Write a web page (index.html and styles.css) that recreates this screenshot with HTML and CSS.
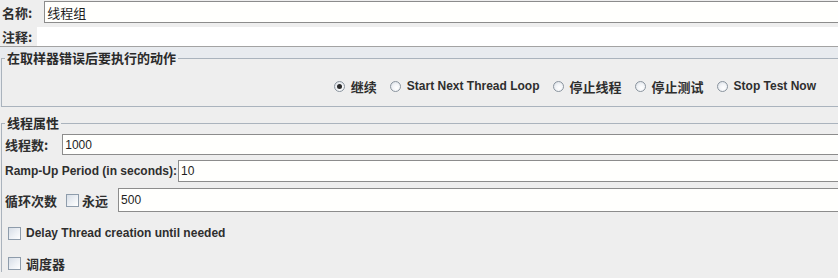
FILE: index.html
```html
<!DOCTYPE html>
<html lang="zh-CN">
<head>
    <meta charset="UTF-8">
    <meta name="viewport" content="width=device-width, initial-scale=1.0">
    <title>线程组</title>
    <link rel="stylesheet" href="styles.css">
</head>
<body>
    <div class="name-row">
        <span class="zh">名称:</span>
        <div class="field name-field"><span class="zh-value">线程组</span></div>
    </div>
    <div class="comment-row">
        <span class="zh">注释:</span>
        <div class="comment-field"></div>
    </div>

    <div class="actions-wrap">
        <fieldset class="group actions">
            <legend class="zh">在取样器错误后要执行的动作</legend>
            <div class="radio-row">
                <label class="radio-item"><span class="radio checked"></span><span class="zh">继续</span></label>
                <label class="radio-item"><span class="radio"></span>Start Next Thread Loop</label>
                <label class="radio-item"><span class="radio"></span><span class="zh">停止线程</span></label>
                <label class="radio-item"><span class="radio"></span><span class="zh">停止测试</span></label>
                <label class="radio-item"><span class="radio"></span>Stop Test Now</label>
            </div>
        </fieldset>
    </div>

    <fieldset class="group props">
        <legend class="zh">线程属性</legend>
        <div class="prop-row threads">
            <span class="zh">线程数:</span>
            <div class="field threads-field">1000</div>
        </div>
        <div class="prop-row ramp">
            <span>Ramp-Up Period (in seconds):</span>
            <div class="field ramp-field">10</div>
        </div>
        <div class="prop-row loops">
            <span class="zh">循环次数</span>
            <span class="checkbox loop-check"></span>
            <span class="zh forever">永远</span>
            <div class="field loops-field">500</div>
        </div>
        <div class="check-row delay">
            <span class="checkbox"></span>
            <span>Delay Thread creation until needed</span>
        </div>
        <div class="check-row scheduler">
            <span class="checkbox"></span>
            <span class="zh">调度器</span>
        </div>
    </fieldset>
</body>
</html>
```

FILE: styles.css
```css
html {
    overflow: hidden;
}

body {
    margin: 0;
    background-color: #eeeeee;
    color: #2e2e2e;
    font-family: "Liberation Sans", "Noto Sans CJK SC", sans-serif;
    font-size: 12px;
    font-weight: bold;
}

.zh {
    font-family: "Noto Sans CJK SC", sans-serif;
    font-size: 13px;
    font-weight: bold;
}

.zh-value {
    font-family: "Noto Sans CJK SC", sans-serif;
    font-size: 13px;
    font-weight: normal;
}

/* text fields */
.field {
    flex: 1;
    display: flex;
    align-items: center;
    box-sizing: border-box;
    padding-left: 2px;
    background-color: #fffffd;
    border: 1px solid #8c8c8c;
    border-right: none;
    color: #1e1e1e;
    font-family: "Liberation Sans", sans-serif;
    font-size: 12px;
    font-weight: normal;
}

.name-row {
    display: flex;
    align-items: center;
    height: 22px;
    margin-top: 1px;
    padding-left: 2px;
}

.name-row .field {
    height: 22px;
    margin-left: 12px;
}

.comment-row {
    display: flex;
    align-items: center;
    height: 19px;
    margin-top: 4px;
    padding-left: 2px;
    border-bottom: 1px solid #a3a3a3;
}

.comment-field {
    flex: 1;
    height: 19px;
    margin-left: 5px;
    background-color: #ffffff;
}

/* titled groups */
.actions-wrap {
    background-color: #e8ebef;
    padding-top: 4px;
}

.group {
    margin: 0 -3px 0 1px;
    padding: 0;
    min-width: 0;
    border: 1px solid #aab3bd;
    background-color: #eeeeee;
}

.group legend {
    margin-left: 3px;
    padding: 0 2px;
    line-height: 14px;
    color: #2a2a2a;
}

.actions {
    padding: 12px 24px 11px 0;
}

.radio-row {
    display: flex;
    justify-content: flex-end;
    align-items: center;
    gap: 13px;
    height: 18px;
}

.radio-item {
    display: flex;
    align-items: center;
    gap: 6px;
    white-space: nowrap;
}

.radio {
    position: relative;
    width: 11px;
    height: 11px;
    box-sizing: border-box;
    border: 1px solid #8a949e;
    border-radius: 50%;
    background: radial-gradient(circle at 60% 65%, #ffffff 0%, #f2f4f7 45%, #d3d9e0 100%);
}

.radio.checked::after {
    content: "";
    position: absolute;
    left: 2px;
    top: 2px;
    width: 5px;
    height: 5px;
    border-radius: 50%;
    background-color: #2b2b2b;
}

.props {
    margin-top: 9px;
    padding: 4px 0 0 3px;
    border-bottom: none;
}

.props legend {
    margin-left: 0;
}

.prop-row {
    display: flex;
    align-items: center;
}

.threads {
    height: 21px;
}

.threads .field {
    height: 21px;
    margin-left: 14px;
}

.ramp {
    height: 22px;
    margin-top: 5px;
}

.ramp .field {
    height: 22px;
    margin-left: 1px;
}

.loops {
    height: 24px;
    margin-top: 6px;
}

.loops .field {
    height: 24px;
    margin-left: 10px;
}

.checkbox {
    width: 13px;
    height: 13px;
    box-sizing: border-box;
    border: 1px solid #8e9cab;
    background: linear-gradient(135deg, #d7dee7 0%, #eef1f5 55%, #ffffff 100%);
}

.loop-check {
    margin-left: 9px;
}

.forever {
    margin-left: 3px;
}

.check-row {
    display: flex;
    align-items: center;
    gap: 5px;
    height: 18px;
    padding-left: 3px;
}

.delay {
    margin-top: 12px;
}

.scheduler {
    margin-top: 12px;
}
```
